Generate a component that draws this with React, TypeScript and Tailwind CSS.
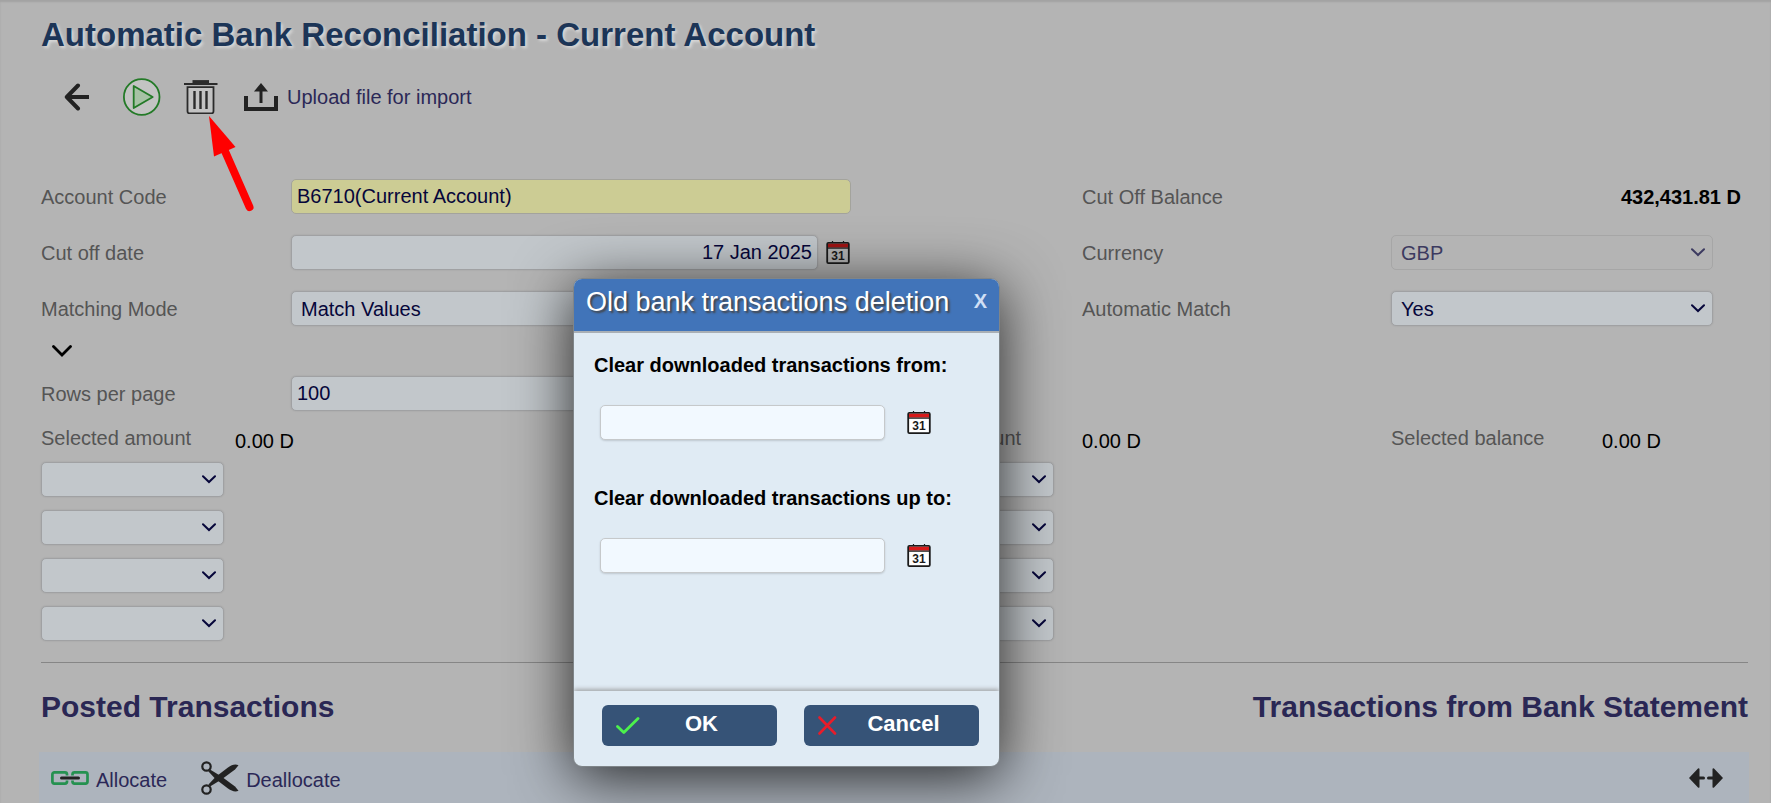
import type { ReactNode } from 'react';
import clsx from 'clsx';

const fieldClass =
  'h-[35px] rounded-[5px] border border-[#a0a1a3] bg-[#c2c7cb] text-xl text-[#06063a] shadow-[0_0_2px_rgba(0,0,0,0.12)] outline-none';

const dialogFieldClass =
  'h-[35px] w-[285px] rounded-[5px] border border-[#c6c9cb] bg-[#f2f9ff] px-1.5 text-xl shadow-[0_1px_2px_rgba(0,0,0,0.15)]';

function ChevronIcon({ className }: { className?: string }) {
  return (
    <svg viewBox="0 0 14 9" className={clsx('h-[9px] w-[14px]', className)} fill="none" stroke="currentColor" strokeWidth="2">
      <path d="M1 1.2 7 7 13 1.2" strokeLinecap="round" />
    </svg>
  );
}

interface SelectProps {
  id?: string;
  label?: string;
  value?: string;
  disabled?: boolean;
  className?: string;
}

function Select({ id, label, value = '', disabled, className }: SelectProps) {
  return (
    <div className={clsx('grid items-center', disabled ? 'text-[#3c3a60]' : 'text-[#06063a]', className)}>
      <select
        id={id}
        aria-label={label}
        disabled={disabled}
        defaultValue={value}
        className={clsx(
          'col-start-1 row-start-1 w-full appearance-none pl-[9px]',
          disabled
            ? 'h-[35px] rounded-[5px] border border-[#a6a6a6] text-xl text-[#3c3a60]'
            : fieldClass,
        )}
      >
        <option>{value}</option>
      </select>
      <ChevronIcon className="pointer-events-none col-start-1 row-start-1 mr-2 justify-self-end" />
    </div>
  );
}

function CalendarIcon({ paper = '#ffffff', red = '#d71a1a' }: { paper?: string; red?: string }) {
  return (
    <svg viewBox="0 0 24 24" className="h-6 w-6">
      <path d="M6.5 0v3M17.5 0v3" stroke="#1a1a1a" strokeWidth="1.2" />
      <rect x="1.2" y="1.9" width="21.6" height="20.2" rx="1.2" fill={paper} stroke="#1a1a1a" strokeWidth="1.8" />
      <rect x="2" y="2.8" width="20" height="3.8" fill={red} />
      <path d="M1.5 7.1h21" stroke="#1a1a1a" strokeWidth="1.2" />
      <text x="12" y="18.6" textAnchor="middle" fontSize="12" fontWeight="700" fontFamily="Liberation Sans, sans-serif" fill="#1a1a1a">
        31
      </text>
    </svg>
  );
}

function BackIcon() {
  return (
    <svg viewBox="0 0 26 28" className="h-7 w-[26px]" fill="none" stroke="#222" strokeWidth="4">
      <path d="M14 2.5 2.8 14 14 25.5" strokeLinecap="round" strokeLinejoin="round" />
      <path d="M3 14h22" />
    </svg>
  );
}

function PlayIcon() {
  return (
    <svg viewBox="0 0 38 38" className="h-[38px] w-[38px]" stroke="#237a27" strokeWidth="1.8">
      <circle cx="18.700" cy="19" r="17.8" fill="#c3c4c3" />
      <path d="M10.700 8v22l19-11Z" fill="#a7c2a5" strokeLinejoin="round" />
    </svg>
  );
}

function TrashIcon() {
  return (
    <svg viewBox="0 0 34 34" className="h-[34px] w-[34px]" fill="none" stroke="#2b2b2b">
      <path d="M8.500 1.8h16.500" strokeWidth="3.4" />
      <path d="M0 4h33.500" strokeWidth="2" />
      <path d="M3.500 7.2h26v24a2.2 2.2 0 0 1-2.2 2.2H5.7A2.2 2.2 0 0 1 3.500 31.200Z" fill="#c3c3c3" strokeWidth="1.8" />
      <path d="M10.500 11v18M16.500 11v18M22.500 11v18" strokeWidth="2.4" />
    </svg>
  );
}

function UploadIcon() {
  return (
    <svg viewBox="0 0 34 30" className="h-[30px] w-[34px]" fill="none" stroke="#222">
      <path d="M2 14v13h30V14" strokeWidth="4" />
      <path d="M17 7v14" strokeWidth="3" />
      <path d="m17 1 7 8.500H10Z" fill="#222" stroke="none" />
    </svg>
  );
}

function LinkIcon() {
  return (
    <svg viewBox="0 0 38 14" className="h-[14px] w-[38px]" fill="none">
      <path d="M16 4.500V3.400A2 2 0 0 0 14 1.400H3.400a2 2 0 0 0-2 2v7.200a2 2 0 0 0 2 2H14a2 2 0 0 0 2-2V9.500M21.500 4.500V3.400a2 2 0 0 1 2-2h11a2 2 0 0 1 2 2v7.200a2 2 0 0 1-2 2h-11a2 2 0 0 1-2-2V9.500" stroke="#259150" strokeWidth="2.700" />
      <path d="M10.500 7h17" stroke="#222" strokeWidth="3" strokeLinecap="round" />
    </svg>
  );
}

function ScissorsIcon() {
  return (
    <svg viewBox="0 0 38 34" className="h-[34px] w-[38px]" fill="none" stroke="#222">
      <circle cx="5.500" cy="5.500" r="4.200" strokeWidth="2.200" />
      <circle cx="5.500" cy="28.500" r="4.200" strokeWidth="2.200" />
      <g fill="#222" stroke="none">
        <path d="M37.500 4.200C34 2.800 30.500 4 27 6.500L14.500 16 7.500 23.500 9 25.500 20.500 18.500 34 8.500Z" />
        <path d="M37.500 29.800C34 31.200 30.500 30 27 27.500L14.500 18 7.500 10.500 9 8.500 20.500 15.500 34 25.500Z" />
      </g>
    </svg>
  );
}

function ExpandIcon() {
  return (
    <svg viewBox="0 0 34 20" className="h-5 w-[34px]" fill="#222">
      <path d="M0 10 9 .5a1 1 0 0 1 1.500.6V8.500h4a1.500 1.500 0 0 1 0 3h-4v7.400a1 1 0 0 1-1.500.6Z" />
      <path d="M34 10 25 .5a1 1 0 0 0-1.500.6V8.500h-4a1.500 1.500 0 0 0 0 3h4v7.400a1 1 0 0 0 1.500.6Z" />
    </svg>
  );
}

function FormLabel({ htmlFor, children }: { htmlFor: string; children: ReactNode }) {
  return (
    <label htmlFor={htmlFor} className="text-[#555]">
      {children}
    </label>
  );
}

function FilterColumn({ side }: { side: string }) {
  return (
    <div className="flex flex-col gap-[13px]">
      {[1, 2, 3, 4].map((n) => (
        <Select key={n} label={`${side} filter ${n}`} className="w-[183px]" />
      ))}
    </div>
  );
}

function DeletionDialog() {
  return (
    <div
      role="dialog"
      aria-labelledby="dialog-title"
      className="absolute top-[278px] left-[573px] flex h-[489px] w-[427px] flex-col overflow-hidden rounded-[9px] border border-[#7f8589] bg-[#e0ebf4] shadow-[0_10px_60px_rgba(0,0,0,0.8)]"
    >
      <div className="flex h-[54px] items-start justify-between border-b-2 border-[#a9afb5] bg-[#4174b9] pr-3 pl-3">
        <h2 id="dialog-title" className="pt-[5px] text-[27px] leading-9 text-white [text-shadow:2px_2px_2px_#444]">
          Old bank transactions deletion
        </h2>
        <button type="button" aria-label="Close" className="pt-2 text-xl font-bold text-[#cfdff5]">
          X
        </button>
      </div>

      <div className="flex-1 px-5 pt-[18px]">
        <label htmlFor="clear-from" className="block text-xl font-bold text-black">
          Clear downloaded transactions from:
        </label>
        <div className="mt-[26px] flex items-center gap-[22px] pl-1.5">
          <input id="clear-from" type="text" className={dialogFieldClass} />
          <button type="button" aria-label="Pick start date">
            <CalendarIcon />
          </button>
        </div>

        <label htmlFor="clear-to" className="mt-[44px] block text-xl font-bold text-black">
          Clear downloaded transactions up to:
        </label>
        <div className="mt-[26px] flex items-center gap-[22px] pl-1.5">
          <input id="clear-to" type="text" className={dialogFieldClass} />
          <button type="button" aria-label="Pick end date">
            <CalendarIcon />
          </button>
        </div>
      </div>

      <div className="flex h-[75px] items-start justify-between pt-[14px] pr-5 pl-7 shadow-[0_-2px_4px_rgba(60,50,40,0.35)]">
        <button type="button" className="flex h-[41px] w-[175px] items-center rounded-md bg-[#365377] px-[14px] text-[22px] font-bold text-white">
          <svg viewBox="0 0 24 24" className="h-6 w-6 shrink-0" fill="none" stroke="#4cf24c" strokeWidth="2.800">
            <path d="M1.500 12.500 7.800 18.500 22 4.500" strokeLinecap="round" strokeLinejoin="round" />
          </svg>
          <span className="flex-1 pb-0.5 text-center">OK</span>
        </button>
        <button type="button" className="flex h-[41px] w-[175px] items-center rounded-md bg-[#365377] px-[14px] text-[22px] font-bold text-white">
          <svg viewBox="0 0 24 24" className="h-6 w-6 shrink-0" fill="none" stroke="#e81c2a" strokeWidth="2.600">
            <path d="M1.500 3.500 17 19.500M17 3.500 1.500 19.500" strokeLinecap="round" />
          </svg>
          <span className="flex-1 pb-0.5 text-center">Cancel</span>
        </button>
      </div>
    </div>
  );
}

export default function App() {
  return (
    <div className="relative min-h-screen overflow-hidden bg-[#b4b4b4] font-['Liberation_Sans',Arial,sans-serif] text-xl shadow-[inset_0_2px_2px_rgba(0,0,0,0.1)]">
      <main className="pt-[15px] pr-[23px] pl-[41px]">
        <h1 className="text-[33px] leading-10 font-bold text-[#1c3557] [text-shadow:2px_2px_3px_#d8d8d8]">
          Automatic Bank Reconciliation - Current Account
        </h1>

        <div className="mt-[23px] flex h-[38px] items-center pl-[23px]">
          <button type="button" aria-label="Back"><BackIcon /></button>
          <button type="button" aria-label="Run" className="ml-[33px]"><PlayIcon /></button>
          <button type="button" aria-label="Delete" className="ml-[23px]"><TrashIcon /></button>
          <button type="button" className="ml-[26px] flex items-center gap-[9px] text-[#2b2857]">
            <UploadIcon />
            <span>Upload file for import</span>
          </button>
        </div>

        <div className="mt-[63px] grid grid-cols-[250fr_791fr_309fr_357fr] items-center gap-y-[21px]">
          <FormLabel htmlFor="account">Account Code</FormLabel>
          <input id="account" readOnly defaultValue="B6710(Current Account)" className="h-[35px] w-[560px] rounded-[5px] border border-[#a3a39c] bg-[#cccc94] px-[5px] text-[#06063a]" />
          <span className="text-[#555]">Cut Off Balance</span>
          <span className="pr-[7px] text-right font-bold text-black">432,431.81 D</span>

          <FormLabel htmlFor="cutoff">Cut off date</FormLabel>
          <div className="flex items-center gap-2">
            <input id="cutoff" defaultValue="17 Jan 2025" className={clsx(fieldClass, 'w-[527px] px-[5px] text-right')} />
            <button type="button" aria-label="Pick cut off date">
              <CalendarIcon paper="#b4b4b4" red="#a01414" />
            </button>
          </div>
          <FormLabel htmlFor="currency">Currency</FormLabel>
          <Select id="currency" value="GBP" disabled className="w-[322px]" />

          <FormLabel htmlFor="mode">Matching Mode</FormLabel>
          <Select id="mode" value="Match Values" className="w-[560px]" />
          <FormLabel htmlFor="auto">Automatic Match</FormLabel>
          <Select id="auto" value="Yes" className="w-[322px]" />
        </div>

        <div className="flex h-[50px] items-center pl-[11px]">
          <button type="button" aria-label="More options">
            <svg viewBox="0 0 20 12" className="h-3 w-5" fill="none" stroke="#000" strokeWidth="2.800">
              <path d="M1.500 1.500 10 10l8.500-8.500" strokeLinecap="round" />
            </svg>
          </button>
        </div>

        <div className="grid grid-cols-[250fr_1457fr] items-center">
          <FormLabel htmlFor="rows">Rows per page</FormLabel>
          <input id="rows" defaultValue="100" className={clsx(fieldClass, 'w-[560px] px-[5px]')} />
        </div>

        <div className="grid grid-cols-[194fr_636fr_211fr_309fr_211fr_146fr]">
          <div className="pt-3 leading-[30px] text-[#555]">Selected amount</div>
          <div className="pt-[15px] leading-[30px] text-black">0.00 D</div>
          <div className="pt-3 leading-[30px] text-[#555]">Selected amount</div>
          <div className="h-[51px] pt-[15px] leading-[30px] text-black">0.00 D</div>
          <div className="pt-3 leading-[30px] text-[#555]">Selected balance</div>
          <div className="pt-[15px] leading-[30px] text-black">0.00 D</div>
          <FilterColumn side="Posted" />
          <div />
          <FilterColumn side="Statement" />
        </div>

        <hr className="mt-[21px] border-[#868686]" />

        <div className="mt-[26px] flex justify-between text-3xl leading-9 font-bold text-[#2a2754]">
          <h2>Posted Transactions</h2>
          <h2>Transactions from Bank Statement</h2>
        </div>
      </main>

      <div className="mt-[27px] mr-[22px] ml-[39px] flex h-[51px] items-center bg-[#adb4bd] pr-[26px] pl-3 text-[#2b2857]">
        <button type="button" className="flex items-center gap-[7px]">
          <LinkIcon />
          <span className="pt-1">Allocate</span>
        </button>
        <button type="button" className="ml-[34px] flex items-center gap-[7px]">
          <ScissorsIcon />
          <span className="pt-1">Deallocate</span>
        </button>
        <button type="button" aria-label="Expand" className="ml-auto"><ExpandIcon /></button>
      </div>

      <DeletionDialog />

      {/* pointer to the delete button */}
      <svg viewBox="0 0 48 98" className="pointer-events-none absolute top-[115px] left-[207px] h-[98px] w-12" fill="#ff0000">
        <path d="M2 1 28.500 32 7 41.500Z" />
        <path d="M17.500 35 42.500 92" stroke="#ff0000" strokeWidth="8" strokeLinecap="round" />
      </svg>
    </div>
  );
}
